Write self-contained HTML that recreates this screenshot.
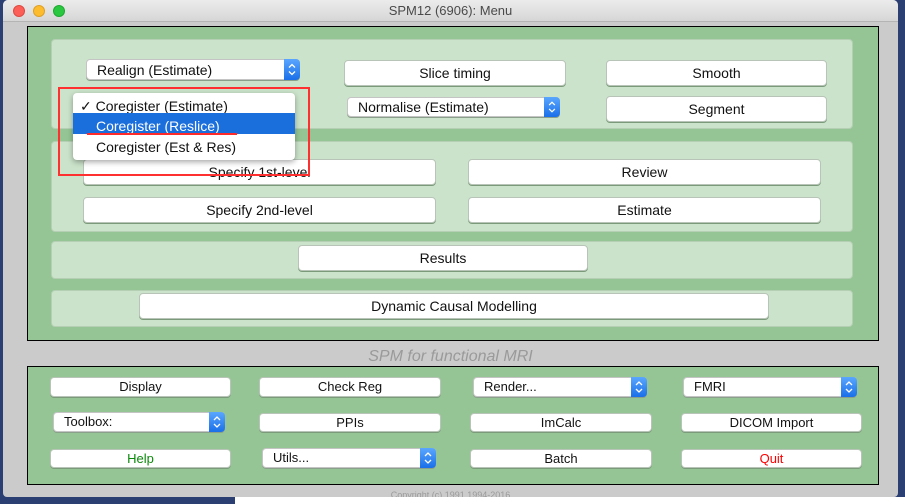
<!DOCTYPE html>
<html><head><meta charset="utf-8"><style>
*{box-sizing:border-box;margin:0;padding:0}
body{width:905px;height:504px;overflow:hidden;background:#2b3f73;font-family:"Liberation Sans",sans-serif;position:relative}
.a{position:absolute}
.win{left:3px;top:0;width:895px;height:497px;background:#cbcbcb;border-radius:5px 5px 4px 4px;overflow:hidden}
.tb{left:0;top:0;width:895px;height:22px;background:linear-gradient(#ececec,#d6d6d6);border-bottom:1px solid #b4b4b4;text-align:center;font-size:13px;color:#4a4a4a;line-height:22px}
.dot{width:12px;height:12px;border-radius:50%;top:5px}
.g{background:#95c594;border:1px solid #000}
.p{background:#cbe3ca;border-radius:4px;border:1px solid #b4cfb3}
.b{background:#fff;border:1px solid #b8c4b8;border-radius:4px;text-align:center;font-size:14px;color:#111;box-shadow:0 1px 0 #7a9a7a}
.s{background:#fff;border:1px solid #c4c4c4;border-radius:4px;font-size:14px;color:#111;padding-left:10px;box-shadow:0 1px 0 #8aa08a}
.s svg{position:absolute;right:-1px;top:-1px;height:calc(100% + 2px);width:16px;border-radius:0 4px 4px 0;background:linear-gradient(#5aa6ff,#1a6fe8)}
.sm{font-size:13px}
</style></head><body>
<div class="a" style="left:235px;top:497px;width:670px;height:7px;background:#fff"></div>
<div class="a win">
 <div class="a tb">SPM12 (6906): Menu</div>
 <div class="a dot" style="left:10px;background:#fc5f57;border:1px solid #de4a42"></div>
 <div class="a dot" style="left:30px;background:#fdbc2e;border:1px solid #dea026"></div>
 <div class="a dot" style="left:50px;background:#29c840;border:1px solid #1fa932"></div>

 <div class="a g" style="left:24px;top:26px;width:852px;height:315px"></div>
 <div class="a p" style="left:48px;top:39px;width:802px;height:90px"></div>
 <div class="a p" style="left:48px;top:141px;width:802px;height:91px"></div>
 <div class="a p" style="left:48px;top:241px;width:802px;height:38px"></div>
 <div class="a p" style="left:48px;top:290px;width:802px;height:37px"></div>

 <div class="a s" style="left:83px;top:59px;width:214px;height:21px;line-height:20px">Realign (Estimate)<svg viewBox="0 0 16 21"><path d="M5 8.5l3-3 3 3M5 12.5l3 3 3-3" fill="none" stroke="#fff" stroke-width="1.3"/></svg></div>
 <div class="a b" style="left:341px;top:60px;width:222px;height:26px;line-height:24px">Slice timing</div>
 <div class="a b" style="left:603px;top:60px;width:221px;height:26px;line-height:24px">Smooth</div>
 <div class="a s" style="left:344px;top:97px;width:213px;height:20px;line-height:19px">Normalise (Estimate)<svg viewBox="0 0 16 21"><path d="M5 8.5l3-3 3 3M5 12.5l3 3 3-3" fill="none" stroke="#fff" stroke-width="1.3"/></svg></div>
 <div class="a b" style="left:603px;top:96px;width:221px;height:26px;line-height:24px">Segment</div>
 <div class="a b" style="left:80px;top:159px;width:353px;height:26px;line-height:24px">Specify 1st-level</div>
 <div class="a b" style="left:465px;top:159px;width:353px;height:26px;line-height:24px">Review</div>
 <div class="a b" style="left:80px;top:197px;width:353px;height:26px;line-height:24px">Specify 2nd-level</div>
 <div class="a b" style="left:465px;top:197px;width:353px;height:26px;line-height:24px">Estimate</div>
 <div class="a b" style="left:295px;top:245px;width:290px;height:26px;line-height:24px">Results</div>
 <div class="a b" style="left:136px;top:293px;width:630px;height:26px;line-height:24px">Dynamic Causal Modelling</div>

 <!-- dropdown -->
 <div class="a" style="left:70px;top:93px;width:222px;height:67px;background:#fff;border-radius:4px;box-shadow:0 2px 6px rgba(0,0,0,.35);font-size:14px;color:#111">
  <div class="a" style="left:7px;top:5px">✓ Coregister (Estimate)</div>
  <div class="a" style="left:0;top:20px;width:222px;height:21px;background:#1a6fdc"></div>
  <div class="a" style="left:23px;top:25px;color:#fff">Coregister (Reslice)</div>
  <div class="a" style="left:14px;top:40px;width:150px;height:2px;background:#ff2a2a"></div>
  <div class="a" style="left:23px;top:46px">Coregister (Est &amp; Res)</div>
 </div>
 <div class="a" style="left:55px;top:87px;width:252px;height:89px;border:2px solid #ff3030"></div>

 <div class="a" style="left:0;top:348px;width:895px;text-align:center;font-size:16px;font-style:italic;color:#9a9a9a;height:20px;overflow:hidden">SPM for functional MRI</div>

 <div class="a g" style="left:24px;top:366px;width:852px;height:119px"></div>
 <div class="a b sm" style="left:47px;top:377px;width:181px;height:20px;line-height:18px">Display</div>
 <div class="a b sm" style="left:256px;top:377px;width:182px;height:20px;line-height:18px">Check Reg</div>
 <div class="a s sm" style="left:470px;top:377px;width:174px;height:20px;line-height:18px">Render...<svg viewBox="0 0 16 20"><path d="M5 8l3-3 3 3M5 12l3 3 3-3" fill="none" stroke="#fff" stroke-width="1.3"/></svg></div>
 <div class="a s sm" style="left:680px;top:377px;width:174px;height:20px;line-height:18px">FMRI<svg viewBox="0 0 16 20"><path d="M5 8l3-3 3 3M5 12l3 3 3-3" fill="none" stroke="#fff" stroke-width="1.3"/></svg></div>
 <div class="a s sm" style="left:50px;top:412px;width:172px;height:20px;line-height:18px">Toolbox:<svg viewBox="0 0 16 20"><path d="M5 8l3-3 3 3M5 12l3 3 3-3" fill="none" stroke="#fff" stroke-width="1.3"/></svg></div>
 <div class="a b sm" style="left:256px;top:413px;width:182px;height:19px;line-height:17px">PPIs</div>
 <div class="a b sm" style="left:467px;top:413px;width:182px;height:19px;line-height:17px">ImCalc</div>
 <div class="a b sm" style="left:678px;top:413px;width:181px;height:19px;line-height:17px">DICOM Import</div>
 <div class="a b sm" style="left:47px;top:449px;width:181px;height:19px;line-height:17px;color:#0a8a0a">Help</div>
 <div class="a s sm" style="left:259px;top:448px;width:174px;height:20px;line-height:18px">Utils...<svg viewBox="0 0 16 20"><path d="M5 8l3-3 3 3M5 12l3 3 3-3" fill="none" stroke="#fff" stroke-width="1.3"/></svg></div>
 <div class="a b sm" style="left:467px;top:449px;width:182px;height:19px;line-height:17px">Batch</div>
 <div class="a b sm" style="left:678px;top:449px;width:181px;height:19px;line-height:17px;color:#f00">Quit</div>
 <div class="a" style="left:0;top:490px;width:895px;text-align:center;font-size:9px;color:#9a9a9a;height:7px;overflow:hidden">Copyright (c) 1991,1994-2016</div>
</div>
</body></html>
